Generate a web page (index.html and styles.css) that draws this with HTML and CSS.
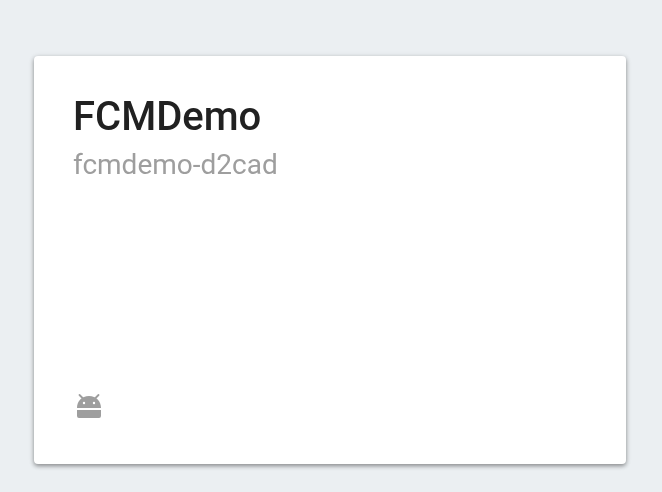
FILE: index.html
```html
<!DOCTYPE html>
<html lang="en">
<head>
<meta charset="utf-8">
<title>FCMDemo</title>
<link rel="stylesheet" href="styles.css">
</head>
<body>
<main class="page">
  <article class="card">
    <header>
      <h1 class="title">FCMDemo</h1>
      <p class="project-id">fcmdemo-d2cad</p>
    </header>
    <svg class="android" viewBox="0 0 26 26" aria-hidden="true">
      <path d="M1 15C1 8 5.700 3 13 3s12 5 12 12zM1 17h24v6q0 2-2 2H3q-2 0-2-2z"/>
      <path class="antenna" d="M3.500 2l4 4M22.500 2l-4 4"/>
      <circle class="eye" cx="8" cy="10" r="1.2"/>
      <circle class="eye" cx="18" cy="10" r="1.2"/>
    </svg>
  </article>
</main>
</body>
</html>
```
FILE: styles.css
```css
body {
  margin: 0;
  background: #ebeff2;
  font-family: Roboto, sans-serif;
}
.page {
  box-sizing: border-box;
  height: 492px;
  padding: 56px 36px 28px 34px;
}
.card {
  box-sizing: border-box;
  height: 408px;
  padding: 37px 39px 45px;
  display: flex;
  flex-direction: column;
  justify-content: space-between;
  background: #fff;
  border-radius: 4px;
  box-shadow: 0 2px 4px rgba(0, 0, 0, .36), 0 1px 6px rgba(0, 0, 0, .1);
}
.title {
  margin: 0;
  font-size: 40px;
  line-height: 48px;
  font-weight: 500;
  color: #212121;
  will-change: transform;
}
.project-id {
  margin: 8px 0 0;
  font-size: 28px;
  line-height: 32px;
  color: #9e9e9e;
  will-change: transform;
}
.android {
  width: 26px;
  height: 26px;
  margin-left: 3px;
  fill: #9e9e9e;
}
.antenna {
  stroke: #9e9e9e;
  stroke-width: 1.8;
  stroke-linecap: round;
}
.eye {
  fill: #fff;
}
```
